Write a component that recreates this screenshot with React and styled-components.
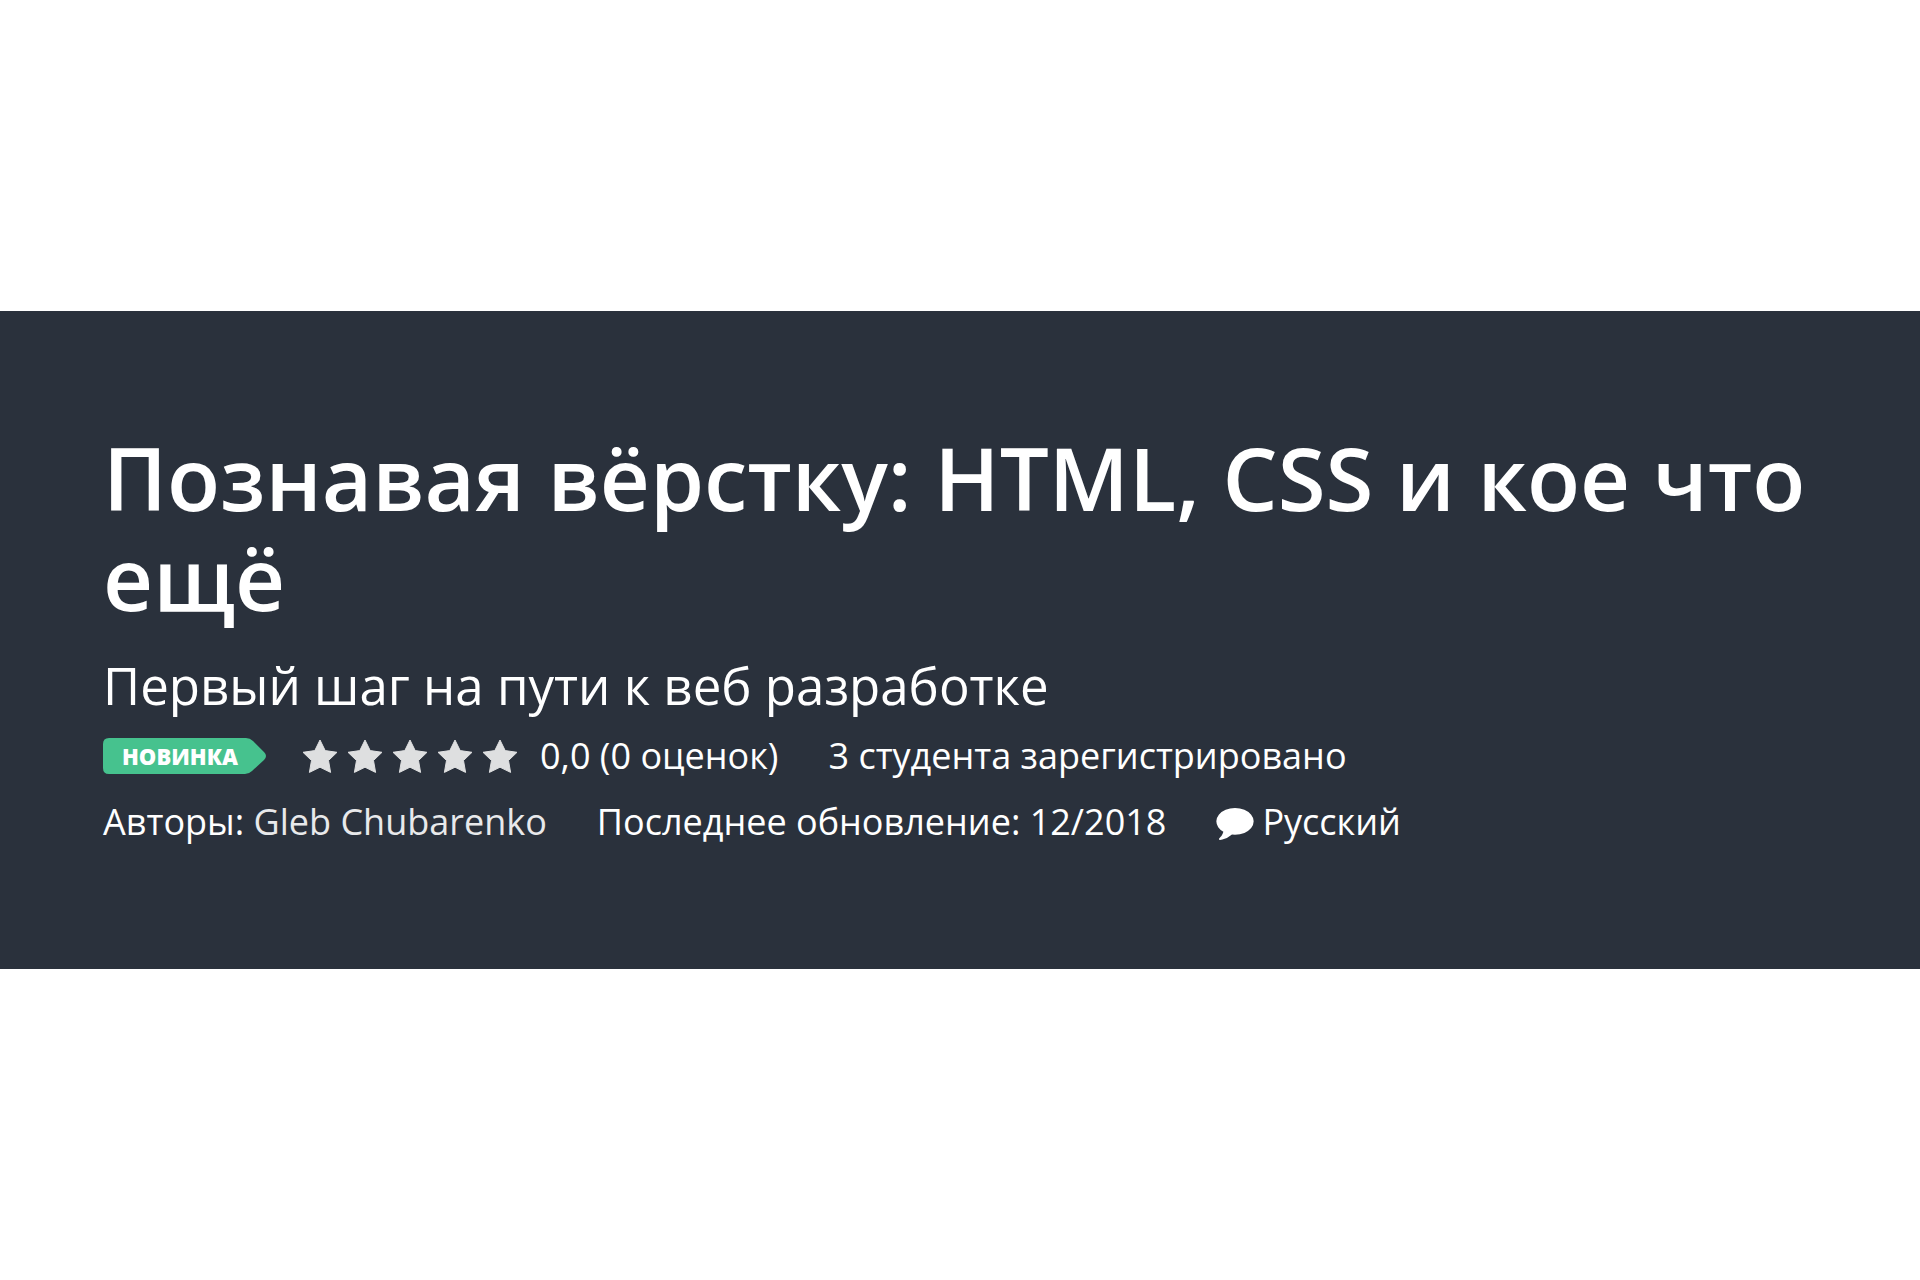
import React from 'react';
import styled, { createGlobalStyle } from 'styled-components';

export default function App() {
  return (
    <>
      <GlobalStyle />
      <Page>
        <Hero>
          <Title>Познавая вёрстку: HTML, CSS и кое что ещё</Title>
          <Subtitle>Первый шаг на пути к веб разработке</Subtitle>
          <RatingRow>
            <Badge>
              <BadgeShape />
              <BadgeText>новинка</BadgeText>
            </Badge>
            <Rating>
              <Stars />
              <span>0,0 (0 оценок)</span>
            </Rating>
            <span>3 студента зарегистрировано</span>
          </RatingRow>
          <Row>
            <span>
              Авторы: <AuthorLink href="#author">Gleb Chubarenko</AuthorLink>
            </span>
            <span>Последнее обновление: 12/2018</span>
            <Language>
              <CommentIcon />
              <span>Русский</span>
            </Language>
          </Row>
        </Hero>
      </Page>
    </>
  );
}

function BadgeShape() {
  return (
    <BadgeSvg viewBox="0 0 164 36" aria-hidden="true">
      <path
        d="M6 0H143Q147 0 150 3L161 14Q165 18 161 22L149 33Q146 36 142 36H6Q0 36 0 30V6Q0 0 6 0Z"
        fill="#46c28e"
      />
    </BadgeSvg>
  );
}

function Stars() {
  return (
    <StarList role="img" aria-label="0,0 из 5">
      {[1, 2, 3, 4, 5].map((star) => (
        <StarSvg key={star} viewBox="0 0 36 35">
          <path
            d="M18 1L23.200 11.600L35 13.300L26.500 21.500L28.600 33.400L18 28.200L7.400 33.400L9.500 21.500L1 13.300L12.800 11.600Z"
            fill="#dedfe0"
            stroke="#dedfe0"
            strokeWidth="1"
            strokeLinejoin="round"
          />
        </StarSvg>
      ))}
    </StarList>
  );
}

function CommentIcon() {
  return (
    <CommentSvg viewBox="0 64 1792 1728" aria-hidden="true">
      <path
        d="M1792 896q0 174-120 321.500t-326 233-450 85.500q-70 0-145-8-198 175-460 242-49 14-114 22-17 2-30.500-9t-17.500-29v-1q-3-4-.5-12t2-10 4.500-9.500l6-9 7-8.500 8-9q7-8 31-34.500t34.500-38 31-39.500 32.500-51 27-59 26-76q-157-89-247.500-220t-90.500-281q0-174 120-321.500t326-233 450-85.500 450 85.500 326 233 120 321.500z"
        fill="#fff"
      />
    </CommentSvg>
  );
}

const GlobalStyle = createGlobalStyle`
  * {
    box-sizing: border-box;
  }

  body {
    margin: 0;
    background: #fff;
    font-family: 'Open Sans', 'Noto Sans', sans-serif;
  }
`;

const Page = styled.main`
  display: flex;
  flex-direction: column;
  justify-content: center;
  min-height: 100vh;
`;

const Hero = styled.header`
  padding: 116px 96px 119px 103px;
  background: #2a313c;
  color: #fff;
`;

const Title = styled.h1`
  margin: 0 0 22px;
  font-size: 87px;
  font-weight: 600;
  line-height: 100px;
`;

const Subtitle = styled.p`
  margin: 0 0 7px;
  font-size: 51px;
  line-height: 72px;
`;

const Row = styled.div`
  display: flex;
  flex-wrap: wrap;
  align-items: center;
  column-gap: 50px;
  font-size: 36px;
  line-height: 56px;
`;

const RatingRow = styled(Row)`
  margin-bottom: 10px;
`;

const Badge = styled.div`
  position: relative;
  width: 164px;
  height: 36px;
  margin-right: -15px;
`;

const BadgeSvg = styled.svg`
  position: absolute;
  inset: 0;
  width: 100%;
  height: 100%;
`;

const BadgeText = styled.span`
  position: relative;
  display: block;
  padding-left: 19px;
  font-size: 22px;
  font-weight: 800;
  line-height: 36px;
  text-transform: uppercase;
`;

const Rating = styled.div`
  display: flex;
  align-items: center;
  gap: 22px;
`;

const StarList = styled.div`
  display: flex;
  gap: 9px;
`;

const StarSvg = styled.svg`
  width: 36px;
  height: 35px;
`;

const AuthorLink = styled.a`
  color: #e8e9eb;
  text-decoration: none;
`;

const Language = styled.div`
  display: flex;
  align-items: center;
  gap: 8px;
`;

const CommentSvg = styled.svg`
  width: 38px;
  height: 36px;
`;
